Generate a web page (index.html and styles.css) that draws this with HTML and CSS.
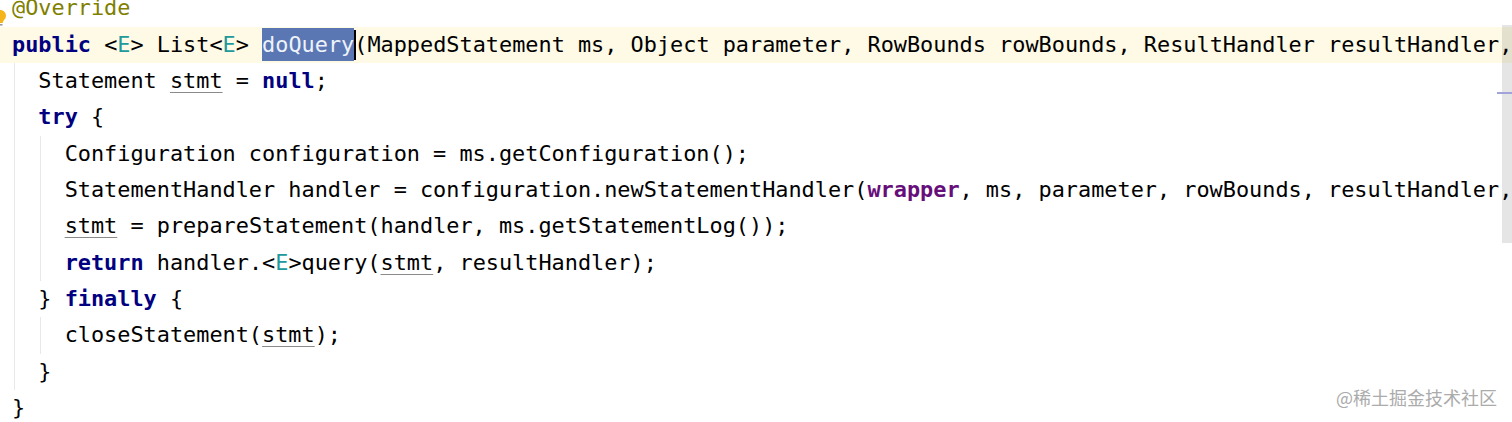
FILE: index.html
```html
<!DOCTYPE html>
<html>
<head>
<meta charset="utf-8">
<link rel="stylesheet" href="styles.css">
</head>
<body>
<div class="editor">
  <div class="code">
    <div class="line pad"><span class="ann">@Override</span></div>
    <div class="line pad current"><span class="kw">public</span> &lt;<span class="tp">E</span>&gt; List&lt;<span class="tp">E</span>&gt; <span class="sel">doQuery</span><span class="caret"></span>(MappedStatement ms, Object parameter, RowBounds rowBounds, ResultHandler resultHandler, BoundSql boundSql) <span class="kw">throws</span> SQLException {</div>
    <div class="block">
      <div class="line">Statement <span class="reassigned">stmt</span> = <span class="kw">null</span>;</div>
      <div class="line"><span class="kw">try</span> {</div>
      <div class="block">
        <div class="line">Configuration configuration = ms.getConfiguration();</div>
        <div class="line">StatementHandler handler = configuration.newStatementHandler(<span class="field">wrapper</span>, ms, parameter, rowBounds, resultHandler, boundSql);</div>
        <div class="line"><span class="reassigned">stmt</span> = prepareStatement(handler, ms.getStatementLog());</div>
        <div class="line"><span class="kw">return</span> handler.&lt;<span class="tp">E</span>&gt;query(<span class="reassigned">stmt</span>, resultHandler);</div>
      </div>
      <div class="line">} <span class="kw">finally</span> {</div>
      <div class="block">
        <div class="line">closeStatement(<span class="reassigned">stmt</span>);</div>
      </div>
      <div class="line">}</div>
    </div>
    <div class="line pad">}</div>
  </div>

  <svg class="bulb" width="14" height="18" viewBox="0 0 14 18">
    <path d="M7 1 C3.5 1 1 3.6 1 6.8 C1 9 2.2 10.4 3.3 11.6 C4 12.4 4.3 13 4.3 14 L9.7 14 C9.7 13 10 12.4 10.7 11.6 C11.8 10.4 13 9 13 6.8 C13 3.6 10.5 1 7 1 Z" fill="#F4B41A"/>
    <rect x="4.5" y="15" width="5" height="1.6" fill="#9A9A9A"/>
  </svg>

  <div class="scrollbar"></div>
  <div class="marker"></div>

  <div class="watermark">@稀土掘金技术社区</div>
</div>
</body>
</html>
```

FILE: styles.css
```css
html, body {
  margin: 0;
  padding: 0;
  background: #ffffff;
}

.editor {
  position: relative;
  width: 1512px;
  height: 422px;
  overflow: hidden;
  background: #ffffff;
}

.code {
  padding-top: 0.1px;
  margin-top: -9.9px;
  font-family: "DejaVu Sans Mono", "Liberation Mono", monospace;
  font-size: 21.86px;
  line-height: 36.36px;
  color: #000000;
}

.line {
  height: 36.36px;
  white-space: pre;
}

.pad {
  padding-left: 12px;
}

.current {
  background: #fefae6;
}

.block {
  margin-left: 14px;
  border-left: 1px solid #e8e8e8;
  padding-left: calc(2ch - 3px);
}

.block .block {
  margin-left: 2px;
}

.kw {
  color: #000080;
  font-weight: bold;
}

.tp {
  color: #20999d;
}

.ann {
  color: #808000;
}

.field {
  color: #660e7a;
  font-weight: bold;
}

.reassigned {
  text-decoration: underline;
  text-decoration-color: #8a8a8a;
  text-decoration-thickness: 1px;
  text-underline-offset: 4px;
}

.sel {
  display: inline-block;
  line-height: 33px;
  background: #5a77b3;
  color: #eef2fa;
}

.caret {
  display: inline-block;
  width: 2px;
  height: 30px;
  margin-right: -2px;
  vertical-align: -8px;
  background: #000000;
}

.bulb {
  position: absolute;
  left: -7px;
  top: 9px;
}

.scrollbar {
  position: absolute;
  right: 0;
  top: 25px;
  width: 10px;
  height: 218px;
  background: rgba(0, 0, 0, 0.1);
}

.marker {
  position: absolute;
  right: 0;
  top: 92px;
  width: 15px;
  height: 2px;
  background: #a3a3dc;
}

.watermark {
  position: absolute;
  right: 15px;
  top: 385px;
  font-family: "Noto Sans CJK SC", "Noto Sans", sans-serif;
  font-size: 18px;
  line-height: 24px;
  color: #ababab;
}
```
